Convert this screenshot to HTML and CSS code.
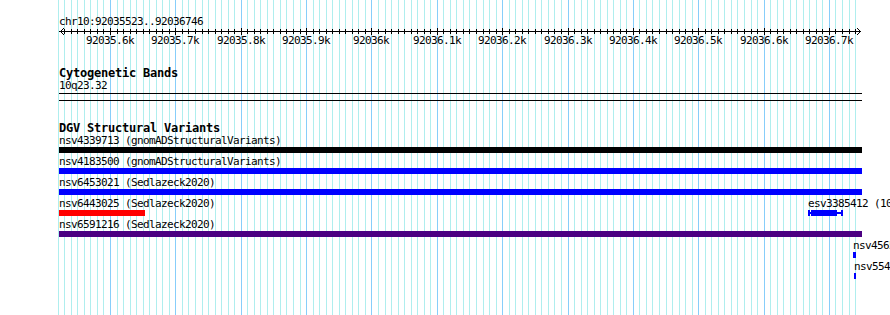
FILE: index.html
```html
<!DOCTYPE html>
<html>
<head>
<meta charset="utf-8">
<title>DGV Structural Variants</title>
<link rel="stylesheet" href="styles.css">
</head>
<body>
<div class="panel">
  <svg class="grid" width="890" height="315" viewBox="0 0 890 315" shape-rendering="crispEdges" aria-hidden="true">
    <path class="grid-minor" d="M58.5 0V315M64.5 0V315M71.5 0V315M77.5 0V315M84.5 0V315M90.5 0V315M97.5 0V315M103.5 0V315M117.5 0V315M123.5 0V315M130.5 0V315M136.5 0V315M143.5 0V315M149.5 0V315M156.5 0V315M162.5 0V315M169.5 0V315M182.5 0V315M188.5 0V315M195.5 0V315M202.5 0V315M208.5 0V315M215.5 0V315M221.5 0V315M228.5 0V315M234.5 0V315M247.5 0V315M254.5 0V315M260.5 0V315M267.5 0V315M273.5 0V315M280.5 0V315M286.5 0V315M293.5 0V315M300.5 0V315M313.5 0V315M319.5 0V315M326.5 0V315M332.5 0V315M339.5 0V315M345.5 0V315M352.5 0V315M358.5 0V315M365.5 0V315M378.5 0V315M385.5 0V315M391.5 0V315M398.5 0V315M404.5 0V315M411.5 0V315M417.5 0V315M424.5 0V315M430.5 0V315M443.5 0V315M450.5 0V315M456.5 0V315M463.5 0V315M469.5 0V315M476.5 0V315M483.5 0V315M489.5 0V315M496.5 0V315M509.5 0V315M515.5 0V315M522.5 0V315M528.5 0V315M535.5 0V315M541.5 0V315M548.5 0V315M554.5 0V315M561.5 0V315M574.5 0V315M581.5 0V315M587.5 0V315M594.5 0V315M600.5 0V315M607.5 0V315M613.5 0V315M620.5 0V315M626.5 0V315M639.5 0V315M646.5 0V315M652.5 0V315M659.5 0V315M666.5 0V315M672.5 0V315M679.5 0V315M685.5 0V315M692.5 0V315M705.5 0V315M711.5 0V315M718.5 0V315M724.5 0V315M731.5 0V315M737.5 0V315M744.5 0V315M751.5 0V315M757.5 0V315M770.5 0V315M777.5 0V315M783.5 0V315M790.5 0V315M796.5 0V315M803.5 0V315M809.5 0V315M816.5 0V315M822.5 0V315M835.5 0V315M842.5 0V315M849.5 0V315M855.5 0V315"/>
    <path class="grid-major" d="M110.5 0V315M175.5 0V315M241.5 0V315M306.5 0V315M371.5 0V315M437.5 0V315M502.5 0V315M568.5 0V315M633.5 0V315M698.5 0V315M764.5 0V315M829.5 0V315"/>
  </svg>

  <div class="content">
    <div class="chrom">chr10:92035523..92036746</div>

    <svg class="ruler" width="890" height="24" viewBox="0 0 890 24">
      <path class="ruler-line" shape-rendering="crispEdges" d="M59 3.5H861"/>
      <path class="ruler-arrow" d="M64 0L60.5 3.5L64 7M857 0L860.5 3.5L857 7"/>
      <path class="ruler-ticks" shape-rendering="crispEdges" d="M64.5 1V6M71.5 1V6M77.5 1V6M84.5 1V6M90.5 1V6M97.5 1V6M103.5 1V6M117.5 1V6M123.5 1V6M130.5 1V6M136.5 1V6M143.5 1V6M149.5 1V6M156.5 1V6M162.5 1V6M169.5 1V6M182.5 1V6M188.5 1V6M195.5 1V6M202.5 1V6M208.5 1V6M215.5 1V6M221.5 1V6M228.5 1V6M234.5 1V6M247.5 1V6M254.5 1V6M260.5 1V6M267.5 1V6M273.5 1V6M280.5 1V6M286.5 1V6M293.5 1V6M300.5 1V6M313.5 1V6M319.5 1V6M326.5 1V6M332.5 1V6M339.5 1V6M345.5 1V6M352.5 1V6M358.5 1V6M365.5 1V6M378.5 1V6M385.5 1V6M391.5 1V6M398.5 1V6M404.5 1V6M411.5 1V6M417.5 1V6M424.5 1V6M430.5 1V6M443.5 1V6M450.5 1V6M456.5 1V6M463.5 1V6M469.5 1V6M476.5 1V6M483.5 1V6M489.5 1V6M496.5 1V6M509.5 1V6M515.5 1V6M522.5 1V6M528.5 1V6M535.5 1V6M541.5 1V6M548.5 1V6M554.5 1V6M561.5 1V6M574.5 1V6M581.5 1V6M587.5 1V6M594.5 1V6M600.5 1V6M607.5 1V6M613.5 1V6M620.5 1V6M626.5 1V6M639.5 1V6M646.5 1V6M652.5 1V6M659.5 1V6M666.5 1V6M672.5 1V6M679.5 1V6M685.5 1V6M692.5 1V6M705.5 1V6M711.5 1V6M718.5 1V6M724.5 1V6M731.5 1V6M737.5 1V6M744.5 1V6M751.5 1V6M757.5 1V6M770.5 1V6M777.5 1V6M783.5 1V6M790.5 1V6M796.5 1V6M803.5 1V6M809.5 1V6M816.5 1V6M822.5 1V6M835.5 1V6M842.5 1V6M849.5 1V6M855.5 1V6M110.5 0V7M175.5 0V7M241.5 0V7M306.5 0V7M371.5 0V7M437.5 0V7M502.5 0V7M568.5 0V7M633.5 0V7M698.5 0V7M764.5 0V7M829.5 0V7"/>
      <g class="ruler-labels">
        <text x="110" y="16">92035.6k</text>
        <text x="175" y="16">92035.7k</text>
        <text x="241" y="16">92035.8k</text>
        <text x="306" y="16">92035.9k</text>
        <text x="371" y="16">92036k</text>
        <text x="437" y="16">92036.1k</text>
        <text x="502" y="16">92036.2k</text>
        <text x="568" y="16">92036.3k</text>
        <text x="633" y="16">92036.4k</text>
        <text x="698" y="16">92036.5k</text>
        <text x="764" y="16">92036.6k</text>
        <text x="829" y="16">92036.7k</text>
      </g>
    </svg>

    <section class="track cyto">
      <div class="track-title">Cytogenetic Bands</div>
      <div class="label">10q23.32</div>
      <div class="rule rule-top"></div>
      <div class="rule rule-bottom"></div>
    </section>

    <section class="track dgv">
      <div class="track-title">DGV Structural Variants</div>

      <div class="row">
        <div class="feat" style="left:0px">
          <div class="label">nsv4339713 (gnomADStructuralVariants)</div>
          <div class="bar bar-black" style="width:803px"></div>
        </div>
      </div>

      <div class="row">
        <div class="feat" style="left:0px">
          <div class="label">nsv4183500 (gnomADStructuralVariants)</div>
          <div class="bar bar-blue" style="width:803px"></div>
        </div>
      </div>

      <div class="row">
        <div class="feat" style="left:0px">
          <div class="label">nsv6453021 (Sedlazeck2020)</div>
          <div class="bar bar-blue" style="width:803px"></div>
        </div>
      </div>

      <div class="row">
        <div class="feat" style="left:0px">
          <div class="label">nsv6443025 (Sedlazeck2020)</div>
          <div class="bar bar-red" style="width:86px"></div>
        </div>
        <div class="feat" style="left:749px">
          <div class="label">esv3385412 (1000_Genomes_Consortium_Phase_3)</div>
          <svg class="dumbbell" width="35" height="6" viewBox="0 0 35 6" shape-rendering="crispEdges">
            <rect x="0" y="0" width="2" height="6"/>
            <rect x="0" y="2" width="35" height="2"/>
            <rect x="3" y="0" width="26" height="6"/>
            <rect x="33" y="0" width="2" height="6"/>
          </svg>
        </div>
      </div>

      <div class="row">
        <div class="feat" style="left:0px">
          <div class="label">nsv6591216 (Sedlazeck2020)</div>
          <div class="bar bar-purple" style="width:803px"></div>
        </div>
      </div>

      <div class="row">
        <div class="feat" style="left:794px">
          <div class="label">nsv4565</div>
          <div class="bar bar-blue" style="width:3px"></div>
        </div>
      </div>

      <div class="row">
        <div class="feat" style="left:795px">
          <div class="label">nsv554</div>
          <div class="bar bar-blue" style="width:2px"></div>
        </div>
      </div>
    </section>
  </div>
</div>
</body>
</html>
```

FILE: styles.css
```css
* {
  box-sizing: border-box;
}

html,
body {
  margin: 0;
  padding: 0;
  background: #ffffff;
}

body {
  width: 890px;
  height: 315px;
  overflow: hidden;
  font-family: "DejaVu Sans Mono", "Liberation Mono", monospace;
  font-size: 11px;
  letter-spacing: -0.62px;
  color: #000000;
}

.panel {
  position: relative;
  width: 890px;
  height: 315px;
  overflow: hidden;
}

.grid {
  position: absolute;
  left: 0;
  top: 0;
}

.grid-minor {
  stroke: #afeeee;
  stroke-width: 1;
  fill: none;
}

.grid-major {
  stroke: #87cefa;
  stroke-width: 1;
  fill: none;
}

.content {
  position: relative;
  padding-left: 59px;
}

.chrom {
  margin-top: 16px;
  line-height: 12px;
  white-space: nowrap;
}

.ruler {
  display: block;
  margin-left: -59px;
}

.ruler-line,
.ruler-ticks,
.ruler-arrow {
  stroke: #000000;
  stroke-width: 1;
  fill: none;
}

.ruler-labels text {
  font-family: "DejaVu Sans Mono", "Liberation Mono", monospace;
  font-size: 11px;
  letter-spacing: -0.62px;
  text-anchor: middle;
  fill: #000000;
}

.track-title {
  font-weight: bold;
  font-size: 12px;
  letter-spacing: -0.22px;
  line-height: 14px;
  white-space: nowrap;
}

.cyto .track-title {
  margin-top: 14px;
}

.label {
  line-height: 12px;
  white-space: nowrap;
}

.rule {
  width: 803px;
  height: 1px;
  background: #000000;
}

.rule-top {
  margin-top: 1px;
}

.rule-bottom {
  margin-top: 6px;
}

.dgv .track-title {
  margin-top: 20px;
}

.row {
  position: relative;
  height: 21px;
}

.feat {
  position: absolute;
  top: 0;
}

.bar {
  height: 6px;
}

.bar-black {
  background: #000000;
}

.bar-blue {
  background: #0000ff;
}

.bar-red {
  background: #ff0000;
}

.bar-purple {
  background: #4b0082;
}

.dumbbell {
  display: block;
  fill: #0000ff;
}
```
